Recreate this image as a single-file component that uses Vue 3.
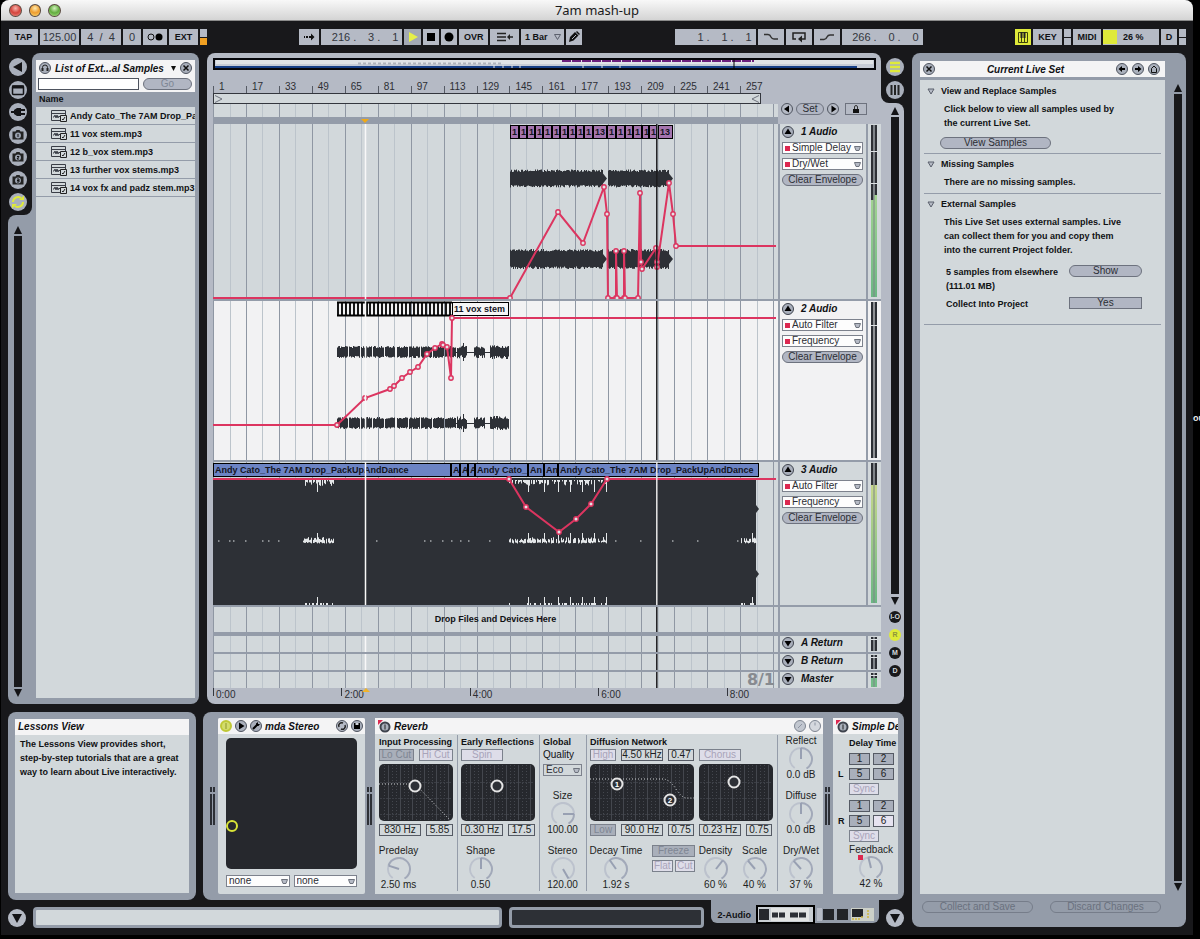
<template>
  <div class="desktop">
    <span class="behind">ou</span>
    <div class="window">
      <header class="titlebar">
        <div class="lights">
          <button class="light red" aria-label="Close"></button>
          <button class="light amber" aria-label="Minimize"></button>
          <button class="light green" aria-label="Zoom"></button>
        </div>
        <h1>7am mash-up</h1>
      </header>

      <nav class="transport">
        <div class="group">
          <button class="cell w29 strong">TAP</button>
          <button class="cell w39 num">125.00</button>
          <button class="cell w40 num">4&nbsp; /&nbsp; 4</button>
          <button class="cell w18 num">0</button>
          <button class="cell w24" aria-label="Metronome">
            <svg width="16" height="8"><circle cx="4" cy="4" r="3" fill="none" stroke="#111" /><circle cx="12" cy="4" r="3.500" fill="#000" /></svg>
          </button>
          <button class="cell w29 strong">EXT</button>
          <span class="led"><i></i><i class="on"></i></span>
        </div>
        <div class="group">
          <button class="cell w20" aria-label="Follow">
            <svg width="12" height="8"><path d="M1 3h1v2H1zM3 3h2v2H3zM6 3h2V0.500L11.500 4L8 7.500V5H6z" fill="#111" /></svg>
          </button>
          <button class="cell pos"><span>216 .</span><span>3 .</span><span>1</span></button>
          <button class="cell w17 play" aria-label="Play">
            <svg width="10" height="10"><path d="M1 0L10 5L1 10z" fill="#e6f04a" /></svg>
          </button>
          <button class="cell w16" aria-label="Stop"><svg width="8" height="8"><rect width="8" height="8" fill="#000" /></svg></button>
          <button class="cell w16" aria-label="Record"><svg width="10" height="10"><circle cx="5" cy="5" r="4.500" fill="#000" /></svg></button>
          <button class="cell w29 strong">OVR</button>
          <button class="cell w29" aria-label="Back to arrangement">
            <svg width="18" height="10"><path d="M1 1.500h9M1 5h9M1 8.500h9M13 5h4" stroke="#222" stroke-width="1.500" /><path d="M11 5l3-3v6z" fill="#222" /></svg>
          </button>
          <button class="cell w43 strong quant">1 Bar <svg width="7" height="6"><path d="M0.500 0.500h6l-3 5z" fill="none" stroke="#5b606c" /></svg></button>
          <button class="cell w16" aria-label="Draw mode">
            <svg width="12" height="12"><path d="M1 11l1-5l5-5l3.500 3.500l-5 5zM8 1l1-1l3 3l-1 1z" fill="#111" /><path d="M4 8l4-4" stroke="#b5bac5" /></svg>
          </button>
        </div>
        <div class="group">
          <button class="cell pos"><span>1 .</span><span>1 .</span><span>1</span></button>
          <button class="cell w26" aria-label="Punch in"><svg width="16" height="8"><path d="M1 1.500h4q2 0 3 2.500q1 2 3 2h4" fill="none" stroke="#333" stroke-width="1.500" /></svg></button>
          <button class="cell w26" aria-label="Loop"><svg width="14" height="12"><path d="M4 8H1V2h12v6H8" fill="none" stroke="#222" stroke-width="1.500" /><path d="M6 8l4-3.500v7z" fill="#222" /></svg></button>
          <button class="cell w26" aria-label="Punch out"><svg width="16" height="8"><path d="M1 6.500h4q2 0 3-2.500q1-2 3-2h4" fill="none" stroke="#333" stroke-width="1.500" /></svg></button>
          <button class="cell pos"><span>266 .</span><span>0 .</span><span>0</span></button>
        </div>
        <div class="group">
          <button class="cell w16 lit" aria-label="Computer keyboard">
            <svg width="10" height="11"><path d="M0.500 0.500h9v10h-9zM3.500 0v10M6.500 0v10" fill="none" stroke="#3d420c" /><path d="M2.500 0h2v6h-2zM5.500 0h2v6h-2z" fill="#222" /></svg>
          </button>
          <button class="cell w29 strong">KEY</button>
          <span class="led"><i></i><i></i></span>
          <button class="cell w28 strong">MIDI</button>
          <span class="cell cpu strong"><i></i>26 %</span>
          <button class="cell w16 strong">D</button>
          <span class="led"><i></i><i></i></span>
        </div>
      </nav>

      <main class="main">
        <div class="left">
          <div class="upper">
            <section class="browser">
              <div class="tabs">
                <div class="tabs-icons">
                  <button v-for="t in browserTabs" :key="t.name" class="disc" :aria-label="t.name">
                    <svg width="18" height="18" v-html="t.icon"></svg>
                  </button>
                </div>
                <div class="tabs-scroll">
                  <svg width="8" height="8"><path d="M4 0l4 8H0z" fill="#131316" /></svg>
                  <div class="bar"></div>
                  <svg width="8" height="8"><path d="M4 8l4-8H0z" fill="#131316" /></svg>
                </div>
              </div>
              <div class="browser-panel">
                <div class="browser-head">
                  <div class="browser-title">
                    <button class="mini" aria-label="Preview">
                      <svg width="12" height="12"><circle cx="6" cy="6" r="5.500" fill="#a9afbb" stroke="#4e535e" /><path d="M3.500 7V5.500a2.500 2.500 0 0 1 5 0V7" fill="none" stroke="#222" /><path d="M2.500 6h2v3h-2zM7.500 6h2v3h-2z" fill="#222" /></svg>
                    </button>
                    <h2>List of Ext...al Samples</h2>
                    <svg width="5" height="5"><path d="M0 0h5L2.500 5z" fill="#111" /></svg>
                    <button class="mini" aria-label="Close list">
                      <svg width="12" height="12"><circle cx="6" cy="6" r="5.500" fill="#a9afbb" stroke="#4e535e" /><path d="M3.500 3.500l5 5M8.500 3.500l-5 5" stroke="#111" stroke-width="1.500" /></svg>
                    </button>
                  </div>
                  <div class="search">
                    <input v-model="query" type="text" aria-label="Search samples">
                    <button class="pill" disabled>Go</button>
                  </div>
                </div>
                <div class="name">Name</div>
                <ul class="files">
                  <li v-for="f in files" :key="f">
                    <svg width="16" height="12"><path d="M0.500 0.500h14v10h-14zM0 3.500h15" fill="none" stroke="#3a3e47" /><path d="M2 7h1l1-2l1 3l1-3l1 3l1-2l1 1" fill="none" stroke="#3a3e47" /><path d="M9.500 5.500h6v6h-6z" fill="#d2d8db" stroke="#222" /><path d="M11 9l1 1l2-3" fill="none" stroke="#222" /></svg>
                    <span>{{ f }}</span>
                  </li>
                </ul>
              </div>
            </section>

            <section class="arrangement">
              <div class="arr-main">
                <svg class="overview" viewBox="0 0 663 12" preserveAspectRatio="none">
                  <rect width="663" height="12" fill="#06070b" />
                  <rect x="2" y="2" width="659" height="8" fill="#c6ccd6" />
                  <rect x="3" y="2" width="657" height="4" fill="#dfe3e6" />
                  <path d="M145 5.500H290" stroke="#aeb3bc" stroke-width="2" stroke-dasharray="3 2" />
                  <rect x="2" y="8" width="642" height="2" fill="#163f86" />
                  <path d="M349 3H541" stroke="#6c1f7c" stroke-width="2" stroke-dasharray="9 1" />
                  <path d="M281 7v3M290 7v3M299 7v3M307 7v3M370 7v3M389 7v3M407 7v3" stroke="#dfe3e6" />
                  <path d="M521 1v10" stroke="#000" />
                </svg>

                <div class="row ruler-row">
                  <div class="rulers">
                    <div class="bars">
                      <span v-for="b in barLabels" :key="b">{{ b }}</span>
                    </div>
                    <div class="loop">
                      <svg width="9" height="8"><path d="M1 0.500l7 3.500l-7 3.500" fill="none" stroke="#6d727c" /></svg>
                      <svg width="9" height="8"><path d="M8 0.500L1 4l7 3.500" fill="none" stroke="#6d727c" /></svg>
                    </div>
                    <div class="scrub"><Grid :y="104" :height="13" /></div>
                  </div>
                  <div class="locators">
                    <button class="mini" aria-label="Previous locator"><svg width="12" height="12"><circle cx="6" cy="6" r="5.500" fill="#b5bac5" stroke="#4e535e" /><path d="M3 6l5-3.500v7z" fill="#000" /></svg></button>
                    <button class="pill set">Set</button>
                    <button class="mini" aria-label="Next locator"><svg width="12" height="12"><circle cx="6" cy="6" r="5.500" fill="#b5bac5" stroke="#4e535e" /><path d="M9.500 6l-5-3.500v7z" fill="#000" /></svg></button>
                    <button class="lock" aria-label="Lock envelopes"><svg width="8" height="8"><path d="M1 4h6v4H1z" fill="#111" /><path d="M2.500 4V2a1.500 1.500 0 0 1 3 0v2" fill="none" stroke="#333" /></svg></button>
                  </div>
                </div>

                <div class="strip">
                  <svg viewBox="213 117 565 7" preserveAspectRatio="none"><path d="M361 119h8l-4 4z" fill="#f0a916" /></svg>
                </div>

                <div class="tracks">
                  <div v-for="t in tracks" :key="t.name" class="row track" :class="t.cls">
                    <div class="lane">
                      <Grid :y="t.y" :height="t.h" />
                      <svg class="fill" :viewBox="`213 ${t.y} 565 ${t.h}`" preserveAspectRatio="none">
                        <path v-for="(w, i) in t.waves" :key="i" :d="w" fill="#2d3036" />
                        <path v-if="t.noise" :d="t.noise" stroke="#e4e7e9" fill="none" />
                        <path v-if="t.slices" :d="t.slices" stroke="#000" stroke-width="1.800" />
                      </svg>
                      <div
                        v-for="(c, i) in t.clips"
                        :key="i"
                        class="clip"
                        :style="{ left: pct(c[0] - 213), width: pct(c[1] - c[0]), background: t.color }"
                      >{{ c[2] }}</div>
                      <svg class="fill" :viewBox="`213 ${t.y} 565 ${t.h}`" preserveAspectRatio="none">
                        <polyline :points="t.env.map(p => p.join()).join(' ')" fill="none" stroke="#dc3560" stroke-width="2" />
                        <circle v-for="(p, i) in t.env.slice(1, -1)" :key="i" :cx="p[0]" :cy="p[1]" r="2.200" fill="#e4e2e6" stroke="#dc3560" stroke-width="1.400" />
                        <path :d="`M365.500 ${t.y}v${t.h}`" stroke="#f8f8f8" stroke-width="1.500" />
                        <path :d="`M656.800 ${t.y}v${t.h}`" :stroke="t.head" stroke-width="1.500" />
                      </svg>
                    </div>
                    <div class="head">
                      <div class="head-name">
                        <button class="mini" :aria-label="`Fold ${t.name}`"><svg width="12" height="12"><circle cx="6" cy="6" r="5.500" fill="#a9afbb" stroke="#3e434d" /><path d="M6 2.500l3.500 5.500h-7z" fill="#000" /></svg></button>
                        <h3>{{ t.name }}</h3>
                      </div>
                      <label v-for="o in t.options" :key="o" class="chooser">
                        <i></i>
                        <select :aria-label="`${t.name} ${o}`"><option>{{ o }}</option></select>
                        <svg width="7" height="5"><path d="M0.500 0.500h6L5 4.500H2z" fill="#b5bac5" stroke="#6d727c" /></svg>
                      </label>
                      <button class="pill clear">Clear Envelope</button>
                    </div>
                    <div class="meter">
                      <svg :viewBox="`0 0 6 ${t.h}`" preserveAspectRatio="none">
                        <defs><linearGradient :id="t.cls" x1="0" y1="0" x2="0" y2="1"><stop offset="0" :stop-color="t.hot" /><stop offset="1" stop-color="#6bb783" /></linearGradient></defs>
                        <path :d="`M0 1h2.500v${t.h - 3}H0zM3.500 1H6v${t.h - 3}H3.500z`" fill="#2d3036" />
                        <path v-if="t.level" :d="`M0 ${t.level}h2.500V${t.h - 2}H0zM3.500 ${t.level - t.lift}H6V${t.h - 2}H3.500z`" :fill="`url(#${t.cls})`" />
                        <rect v-for="m in t.marks" :key="m" :y="m" width="6" height="1" fill="#dfe3e6" />
                      </svg>
                    </div>
                  </div>

                  <div class="row drop">
                    <div class="lane">
                      <Grid :y="607" :height="25" />
                      <p>Drop Files and Devices Here</p>
                      <svg class="fill" viewBox="213 607 565 25" preserveAspectRatio="none"><path d="M656.800 607v25" stroke="#1c1c1f" stroke-width="1.500" /></svg>
                    </div>
                    <div class="blank"></div>
                  </div>
                  <div class="divider"></div>
                  <div v-for="r in returns" :key="r" class="row return">
                    <div class="lane">
                      <Grid :y="636" :height="16" />
                      <svg class="fill" viewBox="213 0 565 16" preserveAspectRatio="none">
                        <path d="M365.500 0v16" stroke="#f8f8f8" stroke-width="1.500" />
                        <path d="M656.800 0v16" stroke="#1c1c1f" stroke-width="1.500" />
                      </svg>
                      <b v-if="r === 'Master'">8/1</b>
                    </div>
                    <div class="head">
                      <div class="head-name">
                        <button class="mini" :aria-label="`Unfold ${r}`"><svg width="12" height="12"><circle cx="6" cy="6" r="5.500" fill="#a9afbb" stroke="#3e434d" /><path d="M6 9.500L9.500 4h-7z" fill="#000" /></svg></button>
                        <h3>{{ r }}</h3>
                      </div>
                    </div>
                    <div class="meter">
                      <svg viewBox="0 0 6 16" preserveAspectRatio="none">
                        <path d="M0 1h2.500v14H0zM3.500 1H6v14H3.500z" fill="#2d3036" />
                        <path v-if="r === 'Master'" d="M0 6h2.500v9H0zM3.500 6H6v9H3.500z" fill="#72bd88" />
                        <path d="M0 3.500h6" stroke="#dfe3e6" />
                      </svg>
                    </div>
                  </div>
                </div>

                <div class="times">
                  <span v-for="n in times" :key="n">{{ n }}</span>
                  <svg width="8" height="5"><path d="M4 0l4 4H0z" fill="#f0b42a" /></svg>
                </div>
              </div>

              <div class="arr-side">
                <div class="notch">
                  <div class="notch-in">
                    <button class="disc" aria-label="Arrangement view"><svg width="18" height="18"><path d="M4 5h10M4 9h10M4 13h10" stroke="#dfea3a" stroke-width="2.500" /></svg></button>
                    <button class="disc" aria-label="Session view"><svg width="18" height="18"><path d="M5.500 4v10M9 4v10M12.500 4v10" stroke="#222" stroke-width="2" /></svg></button>
                  </div>
                </div>
                <div class="side-body">
                  <svg width="8" height="8"><path d="M4 0l4 8H0z" fill="#131316" /></svg>
                  <div class="bar"></div>
                  <svg width="8" height="8"><path d="M4 8l4-8H0z" fill="#131316" /></svg>
                  <button v-for="s in sections" :key="s" class="dot" :class="{ on: s === 'R' }">{{ s }}</button>
                </div>
              </div>
            </section>
          </div>

          <div class="lower">
            <section class="lessons">
              <div class="lessons-in">
                <h2>Lessons View</h2>
                <p>The Lessons View provides short, step-by-step tutorials that are a great way to learn about Live interactively.</p>
              </div>
            </section>

            <section class="devices">
              <Ladder />
              <article class="device mda">
                <header>
                  <svg width="12" height="12"><circle cx="6" cy="6" r="5" fill="#d3dc6c" stroke="#bfc836" stroke-width="2" /><path d="M6 3v6" stroke="#8d952a" /></svg>
                  <svg width="12" height="12"><circle cx="6" cy="6" r="5.500" fill="#a9afbb" stroke="#4e535e" /><path d="M4 2.500L9.500 6L4 9.500z" fill="#000" /></svg>
                  <svg width="12" height="12"><circle cx="6" cy="6" r="5.500" fill="#a9afbb" stroke="#4e535e" /><path d="M3 9l4-4" stroke="#000" stroke-width="2" /><path d="M6 3.500L8 2v2h2L8.500 6H6z" fill="#000" /></svg>
                  <h2>mda Stereo</h2>
                  <svg width="12" height="12"><circle cx="6" cy="6" r="5.500" fill="#b5bac5" stroke="#4e535e" /><path d="M3 7a3 3 0 0 1 4-4M9 5a3 3 0 0 1-4 4" fill="none" stroke="#222" stroke-width="1.500" /></svg>
                  <svg width="12" height="12"><circle cx="6" cy="6" r="5.500" fill="#a9afbb" stroke="#4e535e" /><path d="M3 3h6v6H3z" fill="#000" /><path d="M4.500 3h3v2h-3z" fill="#cfd3da" /></svg>
                </header>
                <div class="mda-body">
                  <svg class="xy" viewBox="0 0 131 131"><rect width="131" height="131" rx="5" fill="#26282d" /><circle cx="6" cy="88" r="5" fill="none" stroke="#d9e437" stroke-width="2" /></svg>
                  <div class="mda-selects">
                    <label v-for="n in 2" :key="n" class="chooser">
                      <select :aria-label="`Parameter ${n}`"><option>none</option></select>
                      <svg width="7" height="5"><path d="M0.500 0.500h6L5 4.500H2z" fill="#b5bac5" stroke="#6d727c" /></svg>
                    </label>
                  </div>
                </div>
              </article>
              <Ladder />
              <article class="device reverb">
                <header>
                  <svg width="14" height="14"><circle cx="8" cy="8" r="4.500" fill="#a9afbb" stroke="#3e434d" stroke-width="2" /><path d="M8 5.500v5" stroke="#222" /><path d="M1 1h5L1 6z" fill="#dc2850" /></svg>
                  <h2>Reverb</h2>
                  <svg width="12" height="12"><circle cx="6" cy="6" r="5.500" fill="#c2c7d0" stroke="#7d8490" /><path d="M4 8l4-4" stroke="#8d94a2" /></svg>
                  <svg width="12" height="12"><circle cx="6" cy="6" r="5.500" fill="#d5d8de" stroke="#7d8490" /><path d="M6 2.500v3" stroke="#8d94a2" /></svg>
                </header>
                <div class="reverb-body">
                  <div class="sec sec-in">
                    <h3>Input Processing</h3>
                    <div class="line"><button class="tog dim grow">Lo Cut</button><button class="tog grow">Hi Cut</button></div>
                    <Scope :width="74" curve="M0 20H36L70 55" :rings="[[36, 22, '']]" />
                    <div class="line"><button class="val w42">830 Hz</button><button class="val grow">5.85</button></div>
                    <div class="knobs"><div class="knob"><span>Predelay</span><Knob :angle="-72" /><span>2.50 ms</span></div></div>
                  </div>
                  <div class="sec sec-in">
                    <h3>Early Reflections</h3>
                    <div class="line"><button class="tog w42">Spin</button></div>
                    <Scope :width="74" :rings="[[36, 22, '']]" />
                    <div class="line"><button class="val w42">0.30 Hz</button><button class="val grow">17.5</button></div>
                    <div class="knobs"><div class="knob"><span>Shape</span><Knob :angle="0" /><span>0.50</span></div></div>
                  </div>
                  <div class="sec sec-global">
                    <h3>Global</h3>
                    <label class="quality">Quality
                      <span class="chooser grey">
                        <select><option>Eco</option></select>
                        <svg width="7" height="5"><path d="M0.500 0.500h6L5 4.500H2z" fill="#b5bac5" stroke="#6d727c" /></svg>
                      </span>
                    </label>
                    <div class="knob first"><span>Size</span><Knob :angle="90" /><span>100.00</span></div>
                    <div class="knob"><span>Stereo</span><Knob :angle="150" /><span>120.00</span></div>
                  </div>
                  <div class="sec sec-diff">
                    <h3>Diffusion Network</h3>
                    <div class="line">
                      <button class="tog w26">High</button><button class="val w42">4.50 kHz</button><button class="val w26">0.47</button><button class="tog w42">Chorus</button>
                    </div>
                    <div class="line">
                      <Scope :width="104" curve="M0 15H74Q80 16 86 25Q91 33 96 34H104" :rings="[[27, 20, '1'], [80, 36, '2']]" />
                      <Scope :width="74" :rings="[[35, 18, '']]" />
                    </div>
                    <div class="line">
                      <button class="tog dim w26">Low</button><button class="val w42">90.0 Hz</button><button class="val w26">0.75</button><button class="val w42">0.23 Hz</button><button class="val w26">0.75</button>
                    </div>
                    <div class="knobs">
                      <div class="knob w52"><span>Decay Time</span><Knob :angle="-35" /><span>1.92 s</span></div>
                      <div class="freeze">
                        <button class="tog dim">Freeze</button>
                        <div><button class="tog">Flat</button><button class="tog">Cut</button></div>
                      </div>
                      <div class="knob"><span>Density</span><Knob :angle="38" /><span>60 %</span></div>
                      <div class="knob"><span>Scale</span><Knob :angle="-40" /><span>40 %</span></div>
                    </div>
                  </div>
                  <div class="sec sec-out">
                    <div class="knob"><span>Reflect</span><Knob :angle="0" /><span>0.0 dB</span></div>
                    <div class="knob"><span>Diffuse</span><Knob :angle="0" /><span>0.0 dB</span></div>
                    <div class="knob"><span>Dry/Wet</span><Knob :angle="-42" /><span>37 %</span></div>
                  </div>
                </div>
              </article>
              <Ladder />
              <article class="device delay">
                <header>
                  <svg width="14" height="14"><circle cx="8" cy="8" r="4.500" fill="#a9afbb" stroke="#3e434d" stroke-width="2" /><path d="M8 5.500v5" stroke="#222" /><path d="M1 1h5L1 6z" fill="#dc2850" /></svg>
                  <h2>Simple Delay</h2>
                </header>
                <div class="delay-body">
                  <h3>Delay Time</h3>
                  <div v-for="ch in ['L', 'R']" :key="ch" class="channel">
                    <b>{{ ch }}</b>
                    <div class="beats">
                      <button v-for="n in [1, 2, 5, 6]" :key="n" class="val shade" :class="{ on: ch === 'R' && n === 6 }">{{ n }}</button>
                      <button class="tog sync">Sync</button>
                    </div>
                  </div>
                  <div class="knob feedback"><span>Feedback</span><Knob :angle="-14" /><span>42 %</span><i class="mark"></i></div>
                </div>
              </article>
            </section>
          </div>

          <footer class="status">
            <button class="disc blue" aria-label="Hide lessons"><svg width="18" height="18"><path d="M4 5h10l-5 9z" fill="#131316" /></svg></button>
            <div class="info"></div>
            <div class="mix"></div>
            <div class="chain">
              <span>2-Audio</span>
              <svg width="120" height="19">
                <rect x="1" y="1" width="57" height="17" fill="#c9ced3" stroke="#000" stroke-width="2" />
                <rect x="3" y="4" width="10" height="11" fill="#26282d" /><rect x="15" y="3" width="38" height="13" fill="#e2e4e4" />
                <path d="M16 7.500h6v5h-6zM23 7.500h6v5h-6zM34 7.500h8v5h-8zM43 7.500h7v5h-7z" fill="#2d3036" />
                <rect x="61" y="3" width="5" height="13" fill="#b5bac5" /><rect x="67" y="4" width="11" height="11" fill="#222428" />
                <rect x="81" y="4" width="11" height="11" fill="#222428" /><rect x="95" y="3" width="23" height="13" fill="#ccd0c8" />
                <rect x="96" y="4" width="11" height="8" fill="#222428" /><path d="M96 14h9M105 12h3M112 5v9" stroke="#d0b63c" stroke-width="1.500" stroke-dasharray="2 1" />
              </svg>
            </div>
            <button class="disc blue" aria-label="Hide devices"><svg width="18" height="18"><path d="M4 5h10l-5 9z" fill="#131316" /></svg></button>
          </footer>
        </div>

        <aside class="manager">
          <div class="manager-top">
            <div class="manager-col">
              <header>
                <button class="mini" aria-label="Close"><svg width="12" height="12"><circle cx="6" cy="6" r="5.500" fill="#a9afbb" stroke="#4e535e" /><path d="M3.500 3.500l5 5M8.500 3.500l-5 5" stroke="#111" stroke-width="1.500" /></svg></button>
                <h2>Current Live Set</h2>
                <button class="mini" aria-label="Back"><svg width="12" height="12"><circle cx="6" cy="6" r="5.500" fill="#a9afbb" stroke="#4e535e" /><path d="M2.500 6L6 3v2h3v2H6v2z" fill="#000" /></svg></button>
                <button class="mini" aria-label="Forward"><svg width="12" height="12"><circle cx="6" cy="6" r="5.500" fill="#a9afbb" stroke="#4e535e" /><path d="M9.500 6L6 3v2H3v2h3v2z" fill="#000" /></svg></button>
                <button class="mini" aria-label="Home"><svg width="12" height="12"><circle cx="6" cy="6" r="5.500" fill="#a9afbb" stroke="#4e535e" /><path d="M3.500 9.500V5.500L6 3l2.500 2.500v4z" fill="none" stroke="#111" /></svg></button>
              </header>
              <div class="manager-body">
                <section class="topic">
                  <h3><svg width="8" height="7"><path d="M1 1h6l-3 5z" fill="#b5bac5" stroke="#5b606c" /></svg>View and Replace Samples</h3>
                  <p>Click below to view all samples used by the current Live Set.</p>
                  <button class="pill view">View Samples</button>
                </section>
                <section class="topic">
                  <h3><svg width="8" height="7"><path d="M1 1h6l-3 5z" fill="#b5bac5" stroke="#5b606c" /></svg>Missing Samples</h3>
                  <p>There are no missing samples.</p>
                </section>
                <section class="topic last">
                  <h3><svg width="8" height="7"><path d="M1 1h6l-3 5z" fill="#b5bac5" stroke="#5b606c" /></svg>External Samples</h3>
                  <p>This Live Set uses external samples. Live can collect them for you and copy them into the current Project folder.</p>
                  <div class="action"><span>5 samples from elsewhere (111.01 MB)</span><button class="pill">Show</button></div>
                  <div class="action"><span>Collect Into Project</span><button class="pill square">Yes</button></div>
                </section>
              </div>
            </div>
            <div class="manager-scroll">
              <svg width="8" height="8"><path d="M4 0l4 8H0z" fill="#131316" /></svg>
              <div class="bar"></div>
              <svg width="8" height="8"><path d="M4 8l4-8H0z" fill="#131316" /></svg>
            </div>
          </div>
          <div class="manager-foot">
            <button class="pill" disabled>Collect and Save</button>
            <button class="pill" disabled>Discard Changes</button>
          </div>
        </aside>
      </main>
    </div>
  </div>
</template>

<script setup>
import { h, ref } from 'vue'

const query = ref('')

const files = [
  'Andy Cato_The 7AM Drop_PackUpAndDance',
  '11 vox stem.mp3',
  '12 b_vox stem.mp3',
  '13 further vox stems.mp3',
  '14 vox fx and padz stem.mp3'
]

const folder = n => `<path d="M3.500 5.500h3l1-1.500h3l1 1.500h3v8h-11z" fill="#222"/><circle cx="9" cy="9.500" r="3" fill="#9aa1ae"/><path d="${n}" fill="none" stroke="#111"/>`
const browserTabs = [
  { name: 'Hide browser', icon: '<path d="M4 9l9-5v10z" fill="#131316"/>' },
  { name: 'Live devices', icon: '<rect x="3.500" y="5" width="11" height="8.500" rx="1" fill="none" stroke="#131316" stroke-width="1.500"/><path d="M3 6h12" stroke="#131316" stroke-width="3"/>' },
  { name: 'Plug-ins', icon: '<path d="M2 9h4M12 7h4M12 11h4" stroke="#131316" stroke-width="2"/><path d="M5 7l3-2h4v8H8l-3-2z" fill="#131316"/>' },
  { name: 'Files 1', icon: folder('M9 8v3') },
  { name: 'Files 2', icon: folder('M8 8.500h2l-2 2.500h2') },
  { name: 'Files 3', icon: folder('M8 8h2v3H8M8 9.500h2') },
  { name: 'Hot swap', icon: '<path d="M4 9a5 5 0 0 1 8-4M14 9a5 5 0 0 1-8 4" fill="none" stroke="#dfea3a" stroke-width="2"/><path d="M10 7h5V2.500zM8 11H3v4.500z" fill="#dfea3a"/>' }
]

const barLabels = Array.from({ length: 17 }, (_, i) => i * 16 + 1)
const times = ['0:00', '2:00', '4:00', '6:00', '8:00']
const sections = ['I-O', 'R', 'M', 'D']
const returns = ['A Return', 'B Return', 'Master']

const pct = px => `${(px / 565) * 100}%`

// repeatable noise so that the waveforms keep their shape
const rnd = n => {
  const s = Math.sin(n * 127.1) * 43758.5453
  return s - Math.floor(s)
}

const wave = (x0, x1, yc, half, jitter) => {
  let top = ''
  let bottom = ''
  for (let x = x0; x < x1; x++) {
    const a = half - rnd(x + yc) * jitter
    const b = half - rnd(x * 3 + yc) * jitter
    top += `L${x} ${(yc - a).toFixed(1)}h1`
    bottom = `L${x + 1} ${(yc + b).toFixed(1)}h-1` + bottom
  }
  return `M${x0} ${yc}${top}${bottom}z`
}

const tailed = (x0, x1, yc, half) => `${wave(x0, x1, yc, half, 2.5)}M${x1} ${yc - 5}l4 5l-4 5z`

const bursts = yc => {
  let d = ''
  for (let x = 337; x < 445; x += 12) d += wave(x, x + (x % 5 ? 11 : 10), yc, 6, 2)
  d += wave(445, 456, yc, 6, 2) + wave(457, 467, yc, 7, 4) + wave(474, 485, yc, 6, 3)
  d += wave(490, 509, yc, 7, 3)
  return `${d}M463 ${yc - 9}h1v18h-1zM455 ${yc}h53v1h-53z`
}

const noise = () => {
  let d = ''
  const spikes = [317, 528, 544, 558, 570, 582, 594, 606, 752]
  const zones = [[303, 334], [509, 607], [741, 757]]
  zones.forEach(([a, b]) => {
    for (let x = a; x < b; x++) {
      const tall = spikes.includes(x)
      const up = tall ? 8 : rnd(x) * 4
      if (rnd(x + 5) > 0.2 || tall) d += `M${x}.5 ${541 - up}V${542 + rnd(x * 2) * 1.5}`
      if (a < 700 && (rnd(x + 9) > 0.35 || tall)) d += `M${x}.5 480v${tall ? 12 : 1 + rnd(x + 3) * 5}`
      if (tall) d += `M${x}.5 605v-8`
      else if (rnd(x + 2) > 0.6) d += `M${x}.5 605v-2`
    }
  })
  for (const x of [218, 229, 233, 245, 262, 268, 278, 376, 424, 430, 442, 451, 460, 468, 489, 615, 640, 672, 697, 737]) {
    d += `M${x} 541h1.500`
  }
  return d
}

const slices = () => {
  let d = ''
  for (let x = 338; x < 452; x += 4) d += `M${x} 302v14`
  return d + 'M337 302.500h115M337 315.500h115M367 302v14'
}

const edges = [510, 519, 527, 535, 543, 552, 560, 568, 576, 584, 593, 607, 616, 625, 633, 642, 649, 657]
const vox = edges.slice(0, -1).map((x, i) => [x, edges[i + 1], edges[i + 1] - x > 12 ? '13' : '1'])
vox.push([658, 673, '13'])

const andy = 'Andy Cato_The 7AM Drop_PackUpAndDance'

const tracks = [
  {
    name: '1 Audio', cls: 't1', y: 124, h: 175, color: '#a474ae', head: '#1c1c1f',
    options: ['Simple Delay', 'Dry/Wet'],
    waves: [tailed(510, 603, 178.5, 9), tailed(608, 669, 178.5, 9), tailed(510, 603, 259, 10), tailed(608, 669, 259, 10)],
    clips: vox,
    env: [[213, 298], [510, 298], [558, 212], [583, 243], [604, 187], [607, 214], [608, 298], [616, 298], [616, 251], [617, 298], [624, 298], [624, 251], [625, 298], [638, 298], [640, 193], [641, 262], [642, 269], [656, 248], [657, 262], [657, 267], [669, 183], [673, 214], [676, 246], [776, 246]],
    level: 76, lift: 5, hot: '#a3d492', marks: [27, 59]
  },
  {
    name: '2 Audio', cls: 't2', y: 301, h: 159, color: '#f6f6f6', head: '#1c1c1f',
    options: ['Auto Filter', 'Frequency'],
    waves: [bursts(352), bursts(423)],
    slices: slices(),
    clips: [[452, 509, '11 vox stem']],
    env: [[213, 425], [337, 425], [365, 398], [390, 389], [394, 386], [402, 378], [410, 372], [418, 367], [427, 354], [435, 348], [442, 344], [443, 345], [447, 347], [451, 378], [452, 318], [776, 318]],
    level: 0, lift: 0, hot: '#a3d492', marks: [24]
  },
  {
    name: '3 Audio', cls: 't3', y: 462, h: 143, color: '#6c84c4', head: '#e8e8e8',
    options: ['Auto Filter', 'Frequency'],
    waves: ['M213 478H756V505l3 4l-3 4V570l3 4l-3 4V605H213z'],
    noise: noise(),
    clips: [[213, 451, andy], [451, 460, 'A'], [460, 468, 'A'], [468, 475, 'A'], [475, 528, 'Andy Cato_'], [528, 544, 'An'], [544, 558, 'An'], [558, 759, andy]],
    env: [[213, 479], [509, 479], [526, 507], [559, 532], [576, 519], [591, 504], [607, 479], [776, 479]],
    level: 23, lift: 0, hot: '#c6d88c', marks: []
  }
]

const Grid = ({ y, height }) => {
  const lines = []
  for (let i = 0; i <= 34; i++) {
    lines.push(h('path', {
      d: `M${(213.5 + i * 16.47).toFixed(1)} ${y}v${height}`,
      stroke: i % 2 ? '#bcc4cb' : '#8f97a3',
      'shape-rendering': 'crispEdges'
    }))
  }
  return h('svg', { class: 'fill', viewBox: `213 ${y} 565 ${height}`, preserveAspectRatio: 'none' }, lines)
}
Grid.props = ['y', 'height']

const Ladder = () => h('svg', { class: 'ladder', width: 6, height: 38 }, [
  h('path', { d: 'M0 0h2v5H0zM3 0h2v5H3zM0 7h2v31H0zM3 7h2v31H3z', fill: '#2d3036' })
])

const Knob = ({ angle }) => {
  const at = (deg, r) => {
    const a = (deg * Math.PI) / 180
    return `${(13 + r * Math.sin(a)).toFixed(2)} ${(12 - r * Math.cos(a)).toFixed(2)}`
  }
  const arc = (from, to) => `M${at(from, 11)}A11 11 0 ${to - from > 180 ? 1 : 0} 1 ${at(to, 11)}`
  return h('svg', { width: 26, height: 22 }, [
    h('path', { d: arc(-145, angle), fill: 'none', stroke: '#bcc2cd', 'stroke-width': 2 }),
    h('path', { d: arc(angle, 150), fill: 'none', stroke: '#a2a9b9', 'stroke-width': 2 }),
    h('path', { d: `M13 12L${at(angle, 11)}`, stroke: '#98a0b2', 'stroke-width': 2 })
  ])
}
Knob.props = ['angle']

const Scope = ({ width, curve, rings }) => {
  const parts = [h('rect', { width, height: 57, rx: 5, fill: '#26282d' })]
  for (let x = 5; x < width - 4; x += 4) {
    parts.push(h('path', { d: `M${x}.5 1v55`, stroke: '#44474e', 'stroke-dasharray': x % 3 ? '1 2' : 'none' }))
  }
  for (const y of [18, 34, 50]) parts.push(h('path', { d: `M1 ${y}.5h${width - 2}`, stroke: '#3b3e45', 'stroke-dasharray': '2 1' }))
  if (curve) parts.push(h('path', { d: curve, fill: 'none', stroke: '#d0d3d6', 'stroke-dasharray': '1 2' }))
  for (const [x, y, label] of rings) {
    parts.push(h('circle', { cx: x, cy: y, r: 5.5, fill: '#2d3036', stroke: '#e4e4e4', 'stroke-width': 2 }))
    if (label) parts.push(h('text', { x, y: y + 3, 'text-anchor': 'middle', 'font-size': 8, 'font-weight': 700, fill: '#fff' }, label))
  }
  return h('svg', { width, height: 57 }, parts)
}
Scope.props = ['width', 'curve', 'rings']
</script>

<style>
body {
  margin: 0;
  background: #000;
}
</style>

<style scoped>
.desktop {
  position: relative;
  display: flex;
  box-sizing: border-box;
  min-height: 100vh;
  padding: 0 7px 4px 1px;
  overflow: hidden;
  background: #000;
  color: #101114;
  font-family: "Liberation Sans", Arial, sans-serif;
  font-size: 9px;
  font-weight: bold;
}

.desktop * {
  box-sizing: border-box;
}

.behind {
  position: absolute;
  top: 413px;
  right: -4px;
  color: #eee;
}

.window {
  display: flex;
  flex: 1;
  flex-direction: column;
  min-width: 0;
  padding-bottom: 8px;
  background: #18181b;
  border-radius: 8px 8px 0 0;
}

h1,
h2,
h3,
p,
ul {
  margin: 0;
  padding: 0;
  font-size: inherit;
}

h2 {
  font-size: 10px;
  font-style: italic;
  white-space: nowrap;
}

svg {
  display: block;
  flex: none;
}

button,
select,
input {
  margin: 0;
  padding: 0;
  border: 0;
  border-radius: 0;
  background: none;
  color: inherit;
  font: inherit;
  white-space: nowrap;
}

/* title bar */
.titlebar {
  display: flex;
  align-items: center;
  height: 21px;
  border-bottom: 1px solid #8a8a8a;
  border-radius: 8px 8px 0 0;
  background: linear-gradient(#f8f8f8, #d4d4d4);
}

.titlebar h1 {
  flex: 1;
  padding-right: 60px;
  color: #1a1a1a;
  font: 13px "Noto Sans", "Open Sans", sans-serif;
  line-height: 20px;
  text-align: center;
}

.lights {
  display: flex;
  gap: 7px;
  width: 60px;
  padding-left: 8px;
}

.light {
  width: 13px;
  height: 13px;
  border: 1px solid #5a4a40;
  border-radius: 50%;
}

.red { background: radial-gradient(circle at 50% 30%, #f6b4ac, #d5443c 50%, #e8988e); }
.amber { background: radial-gradient(circle at 50% 30%, #fdeab0, #ee9c2e 50%, #f8e07e); }
.green { background: radial-gradient(circle at 50% 30%, #d2f0bc, #62ad3e 50%, #b4e492); }

/* transport */
.transport {
  display: flex;
  justify-content: space-between;
  height: 32px;
  padding: 8px 7px 8px 8px;
}

.group {
  display: flex;
  gap: 2px;
}

.cell {
  display: flex;
  align-items: center;
  justify-content: center;
  height: 16px;
  background: #b5bac5;
}

.strong { font-size: 9px; }
.num,
.pos {
  color: #33363d;
  font-size: 11px;
  font-weight: normal;
}

.pos {
  justify-content: flex-end;
  width: 81px;
  padding-right: 4px;
}

.pos span {
  width: 24px;
  text-align: right;
}

.pos span:first-child { width: 32px; }
.pos span:last-child { width: 18px; }
.play { background: #a3a9b4; }
.lit { background: #dfea3a; }
.quant { gap: 6px; }
.w16 { width: 16px; }
.w17 { width: 17px; }
.w18 { width: 18px; }
.w20 { width: 20px; }
.w24 { width: 24px; }
.w26 { width: 26px; }
.w28 { width: 28px; }
.w29 { width: 29px; }
.w39 { width: 39px; }
.w40 { width: 40px; }
.w42 { width: 42px; }
.w43 { width: 43px; }
.grow { flex: 1; }

.led {
  display: flex;
  flex-direction: column;
  gap: 1px;
  width: 7px;
}

.led i {
  flex: 1;
  background: #b5bac5;
}

.led .on { background: #f0a022; }

.cpu {
  gap: 6px;
  justify-content: flex-start;
  width: 56px;
}

.cpu i {
  width: 14px;
  height: 14px;
  background: #dfea3a;
}

/* page frame */
.main {
  display: flex;
  flex: 1;
  gap: 8px;
  min-height: 0;
  padding: 0 7px 0 7px;
}

.left {
  display: flex;
  flex: 1;
  flex-direction: column;
  min-width: 0;
}

.upper {
  display: flex;
  flex: 1;
  gap: 8px;
}

.disc {
  width: 18px;
  height: 18px;
  border-radius: 50%;
  background: #a9afbb;
}

.mini {
  width: 12px;
  height: 12px;
}

.bar {
  flex: 1;
  width: 8px;
  background: #18181b;
}

.pill {
  height: 12px;
  border: 1px solid #6d727e;
  border-radius: 6px;
  background: #b1b6c3;
  color: #2c2e34;
  font-size: 10px;
  font-weight: normal;
  line-height: 10px;
}

.pill:disabled {
  color: #7f8795;
}

/* browser */
.browser {
  display: flex;
  width: 191px;
}

.tabs {
  display: flex;
  flex-direction: column;
  width: 24px;
  background: linear-gradient(#949ca9, #949ca9) right / 8px 100% no-repeat;
}

.tabs-icons {
  display: flex;
  flex-direction: column;
  justify-content: space-between;
  height: 162px;
  padding: 5px 0 4px 1px;
  border-radius: 0 0 8px 0;
  background: #18181b;
}

.tabs-scroll {
  display: flex;
  flex: 1;
  flex-direction: column;
  align-items: center;
  gap: 2px;
  padding: 11px 5px 7px 0;
  border-radius: 8px 0 0 8px;
  background: #949ca9;
}

.browser-panel {
  display: flex;
  flex: 1;
  flex-direction: column;
  min-width: 0;
  padding: 7px 4px 6px;
  border-radius: 8px 8px 8px 0;
  background: #949ca9;
}

.browser-head {
  height: 32px;
  padding: 2px 3px;
  background: #f4f4f5;
}

.browser-title,
.search {
  display: flex;
  align-items: center;
}

.browser-title {
  gap: 4px;
}

.browser-title h2 {
  flex: 1;
}

.search {
  gap: 4px;
  margin-top: 4px;
}

.search input {
  flex: 1;
  min-width: 0;
  height: 12px;
  margin-left: -1px;
  border: 1px solid #4e535e;
  background: #fff;
}

.search .pill { width: 49px; }

.name {
  height: 15px;
  padding-left: 3px;
  line-height: 15px;
}

.files {
  flex: 1;
  overflow: hidden;
  background: #d2d8db;
  list-style: none;
}

.files li {
  display: flex;
  gap: 3px;
  align-items: center;
  height: 18px;
  padding-left: 15px;
  overflow: hidden;
  border-bottom: 1px solid #949ca9;
  white-space: nowrap;
}

/* arrangement */
.arrangement {
  display: flex;
  flex: 1;
  min-width: 0;
}

.arr-main {
  display: flex;
  flex: 1;
  flex-direction: column;
  min-width: 0;
  padding: 5px 0 0 6px;
  border-radius: 8px 8px 0 8px;
  background: #b5bac5;
}

.overview {
  width: calc(100% - 5px);
  height: 12px;
}

.row {
  display: grid;
  grid-template-columns: minmax(0, 1fr) 86px 13px;
  gap: 2px;
}

.ruler-row { height: 47px; }

.rulers {
  display: flex;
  flex-direction: column;
}

.bars {
  display: flex;
  align-items: flex-end;
  height: 23px;
}

.bars span {
  flex: 0 0 5.832%;
  height: 7px;
  padding: 1px 0 0 5px;
  border-left: 1px solid #555a64;
  color: #2c2e34;
  font-size: 10px;
  font-weight: normal;
  line-height: 0;
}

.loop {
  display: flex;
  align-items: center;
  justify-content: space-between;
  width: 97%;
  height: 11px;
  border: 1px solid #33363d;
  background: #d2d8db;
}

.scrub {
  position: relative;
  flex: 1;
  background: #d2d8db;
}

.locators {
  display: flex;
  grid-column: 2 / 4;
  gap: 3px;
  align-items: flex-end;
  padding: 0 0 2px 1px;
}

.set { width: 28px; }

.lock {
  display: flex;
  align-items: center;
  justify-content: center;
  width: 22px;
  height: 12px;
  margin-left: 3px;
  border: 1px solid #6d727e;
}

.strip {
  width: calc(100% - 103px);
  height: 7px;
  background: #949ca9;
}

.strip svg {
  width: 100%;
  height: 7px;
}

.tracks {
  display: flex;
  flex: 1;
  flex-direction: column;
  gap: 2px;
  background: #949ca9;
}

.lane {
  position: relative;
  overflow: hidden;
  background: #d2d8db;
}

.fill {
  position: absolute;
  inset: 0;
  width: 100%;
  height: 100%;
}

.t1 { height: 175px; }
.t2 { height: 159px; }
.t3 { height: 143px; }
.t2 .lane,
.t2 .head,
.t2 .meter { background: #f2f2f3; }

.clip {
  position: absolute;
  top: 1px;
  height: 14px;
  padding-left: 1px;
  overflow: hidden;
  border: 1px solid #000;
  color: #14141e;
  line-height: 12px;
  white-space: nowrap;
}

.head {
  display: flex;
  flex-direction: column;
  gap: 4px;
  padding: 1px 3px 0 2px;
  background: #d2d8db;
}

.head-name {
  display: flex;
  gap: 7px;
  align-items: center;
  height: 13px;
}

.head-name h3 {
  font-size: 10px;
  font-style: italic;
}

.chooser {
  display: flex;
  gap: 2px;
  align-items: center;
  height: 12px;
  padding: 0 1px 0 2px;
  border: 1px solid #7d828d;
  background: #fdfdfd;
  font-size: 10px;
  font-weight: normal;
}

.chooser i {
  width: 5px;
  height: 5px;
  background: #dc2850;
}

.chooser select {
  flex: 1;
  min-width: 0;
  height: 10px;
  appearance: none;
  color: #2c2e34;
  line-height: 10px;
  outline: none;
}

.chooser.grey { background: #d2d8db; }

.meter {
  display: flex;
  justify-content: center;
  padding-right: 1px;
  background: #d2d8db;
}

.meter svg {
  width: 6px;
  height: 100%;
}

.drop {
  flex: 1;
}

.drop p {
  position: relative;
  line-height: 25px;
  text-align: center;
}

.blank {
  grid-column: 2 / 4;
  background: #d2d8db;
}

.divider { height: 0; }

.return { height: 16px; }

.return .head { padding-top: 0; }

.return .lane b {
  position: absolute;
  right: 3px;
  bottom: 0;
  color: #878b90;
  font: bold 16px "DejaVu Sans", sans-serif;
  line-height: 17px;
}

.times {
  position: relative;
  display: flex;
  width: calc(100% - 103px);
  height: 16px;
}

.times span {
  flex: 0 0 22.73%;
  height: 8px;
  padding: 5px 0 0 2px;
  border-left: 1px solid #33363d;
  color: #2c2e34;
  font-size: 10px;
  font-weight: normal;
  line-height: 4px;
}

.times span:last-of-type {
  flex-basis: 0;
}

.times svg {
  position: absolute;
  left: 26.3%;
}

.arr-side {
  display: flex;
  flex-direction: column;
  width: 23px;
}

.notch { background: #b5bac5; }

.notch-in {
  display: flex;
  flex-direction: column;
  gap: 5px;
  height: 50px;
  padding: 5px 0 0 5px;
  border-radius: 0 0 0 8px;
  background: #18181b;
}

.side-body {
  display: flex;
  flex: 1;
  flex-direction: column;
  align-items: center;
  padding: 4px 0 27px 5px;
  border-radius: 0 8px 8px 0;
  background: #b5bac5;
}

.side-body .bar { margin: 2px 0 3px; }

.dot {
  width: 12px;
  height: 12px;
  margin-top: 6px;
  border-radius: 50%;
  background: #18181b;
  color: #d2d8db;
  font-size: 7px;
  line-height: 12px;
  text-align: center;
}

.dot.on {
  background: #dfea3a;
  color: #8d943a;
}

/* lessons and devices */
.lower {
  display: flex;
  gap: 7px;
  height: 188px;
  margin-top: 8px;
}

.lessons {
  width: 188px;
  padding: 7px;
  border-radius: 8px;
  background: #949ca9;
}

.lessons-in {
  height: 100%;
  background: #d2d8db;
}

.lessons h2 {
  padding-left: 3px;
  background: #f4f4f5;
  line-height: 16px;
}

.lessons p {
  padding: 2px 5px;
  line-height: 14px;
}

.devices {
  display: flex;
  flex: 1;
  align-items: center;
  min-width: 0;
  padding: 6px 6px 6px 7px;
  overflow: hidden;
  border-radius: 8px;
  background: #949ca9;
}

.ladder { margin: 0 2px 0 0; }

.device {
  flex: none;
  height: 176px;
  overflow: hidden;
  background: #d2d8db;
}

.device header {
  display: flex;
  gap: 3px;
  align-items: center;
  height: 16px;
  padding: 0 2px;
  background: #f4f4f5;
}

.device header h2 { flex: 1; }

.mda {
  width: 147px;
  margin: 0 2px 0 0;
  border-radius: 2px;
}

.mda-body { padding: 4px 8px; }

.xy {
  width: 131px;
  height: 131px;
}

.mda-selects {
  display: flex;
  gap: 4px;
  margin-top: 6px;
}

.mda-selects .chooser { flex: 1; }

.reverb {
  flex: 1;
  min-width: 448px;
  margin-right: 2px;
}

.reverb-body {
  display: flex;
  height: 160px;
  padding: 1px 2px 3px 4px;
}

.sec {
  display: flex;
  flex-direction: column;
}

.sec + .sec {
  padding-left: 3px;
  border-left: 1px solid #949ca9;
}

.sec h3,
.delay-body h3 {
  height: 14px;
  line-height: 14px;
  white-space: nowrap;
}

.sec-in {
  width: 82px;
  padding-right: 4px;
}

.sec-in:first-child { width: 78px; }

.sec-global {
  width: 47px;
  padding-right: 4px;
}

.sec-diff {
  flex: 1;
}

.sec-out {
  width: 44px;
  align-items: center;
  justify-content: space-between;
}

.line {
  display: flex;
  gap: 5px;
  margin-bottom: 3px;
}

.sec > svg { margin-bottom: 3px; }

.tog,
.val {
  height: 12px;
  overflow: hidden;
  border: 1px solid #7b818c;
  font-size: 10px;
  font-weight: normal;
  line-height: 10px;
  text-align: center;
}

.tog {
  background: #dedde9;
  color: #a9a4ba;
}

.tog.dim {
  background: #a9afba;
  color: #7f8693;
}

.val {
  border-color: #555a64;
  color: #1c1e22;
}

.val.shade { background: #a9afbb; }
.val.on { background: #e6e3f0; }

.knobs {
  display: flex;
  margin-top: auto;
}

.knob {
  display: flex;
  flex-direction: column;
  align-items: center;
  width: 39px;
  height: 46px;
  color: #1c1e22;
  font-size: 10px;
  font-weight: normal;
  line-height: 12px;
  white-space: nowrap;
}

.w52 { width: 52px; }

.quality {
  font-size: 10px;
  font-weight: normal;
  line-height: 12px;
}

.quality .chooser {
  width: 39px;
  margin-top: 3px;
}

.first { margin: auto 0 9px; }

.freeze {
  display: flex;
  flex-direction: column;
  gap: 3px;
  width: 43px;
  margin: 0 1px 0 10px;
}

.freeze div {
  display: flex;
  gap: 2px;
}

.freeze div .tog { flex: 1; }

.delay {
  flex: 0 0 65px;
}

.delay header { overflow: hidden; }

.delay-body { padding: 2px 3px 0 5px; }

.delay-body h3 { padding-left: 11px; }

.channel {
  display: flex;
  gap: 5px;
  align-items: center;
  margin: 3px 0 5px;
}

.channel b { width: 6px; }

.beats {
  display: flex;
  flex: 1;
  flex-wrap: wrap;
  gap: 3px;
}

.beats .val { width: 21px; }
.beats .sync { width: 30px; }

.feedback {
  position: relative;
  width: 66px;
  margin-top: -3px;
}

.mark {
  position: absolute;
  top: 11px;
  left: 20px;
  width: 5px;
  height: 5px;
  background: #dc2850;
}

/* status bar */
.status {
  display: flex;
  gap: 7px;
  height: 27px;
}

.status .disc {
  margin: 9px 0 0;
}

.blue { background: #b5bac5; }

.info,
.mix {
  height: 21px;
  margin-top: 7px;
  border: 3px solid #949ca9;
  border-radius: 4px;
}

.info {
  flex: 1;
  background: #d2d8db;
}

.mix {
  width: 195px;
  background: #2d3036;
}

.chain {
  display: flex;
  gap: 5px;
  align-items: center;
  justify-content: flex-end;
  width: 168px;
  height: 23px;
  padding: 6px 3px 0 6px;
  border-radius: 0 0 6px 6px;
  background: #949ca9;
}

/* file manager */
.manager {
  display: flex;
  flex-direction: column;
  width: 274px;
  padding: 8px 3px 14px 8px;
  border-radius: 8px;
  background: #949ca9;
}

.manager-top {
  display: flex;
  flex: 1;
  gap: 8px;
}

.manager-col {
  display: flex;
  flex: 1;
  flex-direction: column;
  gap: 3px;
}

.manager header {
  display: flex;
  gap: 4px;
  align-items: center;
  height: 16px;
  padding: 0 5px 0 3px;
  background: #f4f4f5;
}

.manager header h2 {
  flex: 1;
  text-align: center;
}

.manager-body {
  flex: 1;
  padding: 1px 4px 0;
  background: #d2d8db;
}

.topic {
  padding: 3px 19px 0 3px;
  border-bottom: 1px solid #949ca9;
}

.topic.last { padding-bottom: 13px; }

.topic h3 {
  display: flex;
  gap: 6px;
  align-items: center;
  line-height: 14px;
}

.topic p {
  padding: 4px 16px 4px 17px;
  line-height: 14px;
}

.view {
  display: block;
  width: 111px;
  margin: 3px 0 4px 13px;
}

.action {
  display: flex;
  justify-content: space-between;
  padding: 4px 0 0 19px;
  line-height: 14px;
}

.action span { width: 118px; }
.action .pill { width: 73px; }
.pill.square { border-radius: 0; }

.manager-scroll {
  display: flex;
  flex-direction: column;
  gap: 2px;
  align-items: center;
  width: 10px;
  padding: 23px 0 3px;
}

.manager-foot {
  display: flex;
  justify-content: space-between;
  padding: 7px 22px 0 2px;
}

.manager-foot .pill {
  width: 111px;
  background: #949ca9;
  border-color: #767d8a;
  color: #6a717e;
}
</style>
